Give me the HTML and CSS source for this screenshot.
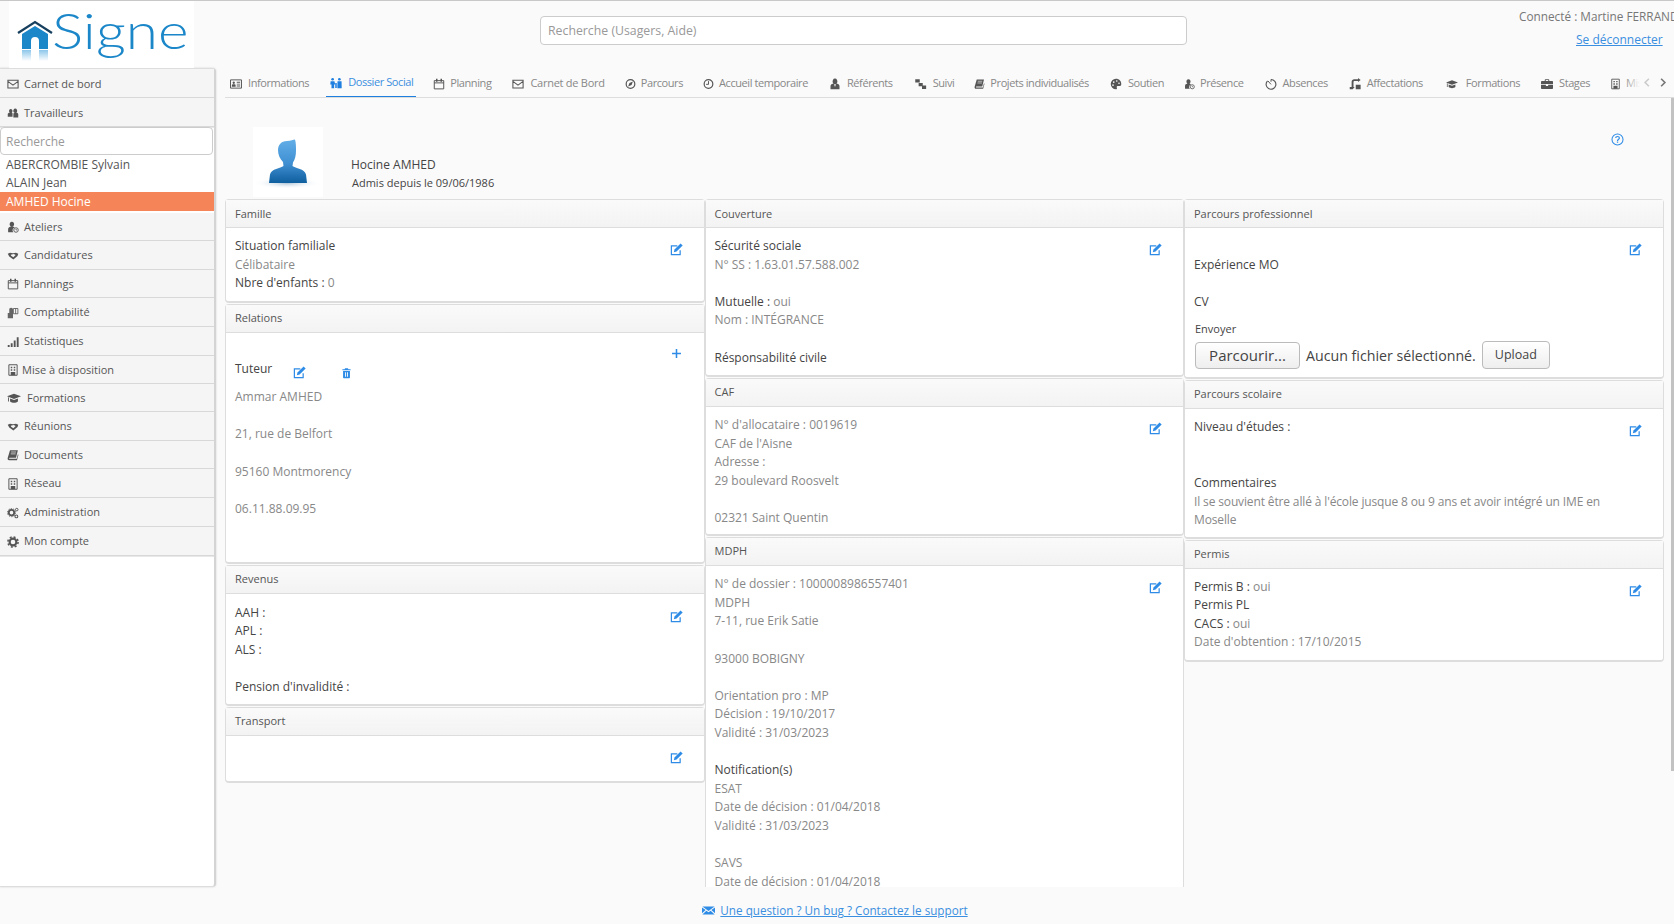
FILE: index.html
```html
<!DOCTYPE html>
<html lang="fr">
<head>
    <meta charset="UTF-8">
    <title>Signe - Dossier Social</title>
    <link rel="stylesheet" href="styles.css">
</head>
<body>
    <!-- icon set -->
    <svg class="defs" width="0" height="0">
        <symbol id="i-mail" viewBox="0 0 16 16"><path d="M1.2 3h13.6v10.4H1.2z M1.2 4.600L8 9.600l6.800-5" fill="none" stroke="currentColor" stroke-width="1.400"/></symbol>
        <symbol id="i-users" viewBox="0 0 16 16"><path d="M5 2.500a2.300 2.800 0 1 1-.01 0zM1 13V9.500c0-1.300 1.200-2 2.400-2h3.200C7.800 7.500 7.400 8.500 7.400 9.500V13z M11 2a2.600 3 0 1 1-.01 0zM8.500 14V9.500C8.500 8 9.500 7.500 10.500 7.500h1.500c1.500 0 3 .6 3 2.200V14z" fill="currentColor"/></symbol>
        <symbol id="i-userclock" viewBox="0 0 16 16"><path d="M6.500 1a3 3.400 0 1 1-.01 0zM1.500 15v-4c0-2 1.500-3.200 3-3.200h4c.8 0 1.400.3 1.900.8A3.800 3.800 0 0 0 8.500 15z" fill="currentColor"/><circle cx="12" cy="12" r="3" fill="none" stroke="currentColor" stroke-width="1.200"/><path d="M12 10.500V12h1.200" fill="none" stroke="currentColor"/></symbol>
        <symbol id="i-shake" viewBox="0 0 16 16"><path d="M1 5l3-1.500 4 .8 4-.8L15 5l-1 3-5.500 4.500L3 8.500z" fill="currentColor"/><path d="M5 6.200l4-.9 2.500 1.500-3 3-3-2.200z" fill="#f5f5f5"/></symbol>
        <symbol id="i-cal" viewBox="0 0 16 16"><path d="M1.700 3.500h12.600v11H1.700z M1.700 6.500h12.600" fill="none" stroke="currentColor" stroke-width="1.300"/><path d="M4 1h2v4H4zM10 1h2v4h-2z" fill="currentColor"/></symbol>
        <symbol id="i-compta" viewBox="0 0 16 16"><path d="M1 8h7v7H1zM3 8V3.500C3 2 4 1 5.500 1S8 2 8 3.500V8" fill="currentColor" fill-opacity=".9"/><path d="M8.500 2h6v7h-6z M11.500 2v7" fill="none" stroke="currentColor" stroke-width="1.100"/></symbol>
        <symbol id="i-signal" viewBox="0 0 16 16"><path d="M1 12h2.500v2.500H1zM5 9.500h2.500v5H5zM9 6h2.500v8.500H9zM13 1.500h2.500v13H13z" fill="currentColor"/></symbol>
        <symbol id="i-bldg" viewBox="0 0 16 16"><path d="M2.500 1h11v14h-11z" fill="none" stroke="currentColor" stroke-width="1.300"/><path d="M5 3.500h2v2H5zM9 3.500h2v2H9zM5 7h2v2H5zM9 7h2v2H9zM5 10.500h6v4.500H5z" fill="currentColor"/></symbol>
        <symbol id="i-cap" viewBox="0 0 16 16"><path d="M0 6l8-3 8 3-8 3zM3.500 8.500L8 10.200l4.500-1.700V12c-1 1-3 1.500-4.500 1.500S4.500 13 3.500 12zM1.200 7v5h1V7.400z" fill="currentColor"/></symbol>
        <symbol id="i-book" viewBox="0 0 16 16"><path d="M4 1.500h10.500l-2.500 10H3.500c-.8 0-.9 1.500 0 1.500h9.500l1.500-6 .8.500-2 7.500H3c-2 0-2.500-2-2-3.500z" fill="currentColor"/><path d="M5.500 4h6.500M5 6.500h6.500" stroke="#f5f5f5" stroke-width=".9"/></symbol>
        <symbol id="i-cogs" viewBox="0 0 16 16"><circle cx="6" cy="7.500" r="3.600" fill="none" stroke="currentColor" stroke-width="2.400"/><circle cx="6" cy="7.500" r="5.400" fill="none" stroke="currentColor" stroke-width="1.200" stroke-dasharray="1.800 1.600"/><circle cx="13" cy="3.500" r="1.700" fill="none" stroke="currentColor" stroke-width="1.300"/><circle cx="12.500" cy="12.500" r="1.900" fill="none" stroke="currentColor" stroke-width="1.400"/></symbol>
        <symbol id="i-cog" viewBox="0 0 16 16"><circle cx="8" cy="8" r="4.500" fill="none" stroke="currentColor" stroke-width="2.800"/><circle cx="8" cy="8" r="6.800" fill="none" stroke="currentColor" stroke-width="2" stroke-dasharray="2.700 2.640"/></symbol>
        <symbol id="i-id" viewBox="0 0 16 16"><path d="M.7 2.500h14.600v11H.7z" fill="none" stroke="currentColor" stroke-width="1.300"/><path d="M5 4.500a1.500 1.700 0 1 1-.01 0zM2.500 11.500V9.500c0-.8.600-1.200 1.200-1.200h2.600c.6 0 1.200.4 1.200 1.200v2zM9 5h4.500v1.300H9zM9 7.500h4.500v1.300H9zM9 10h4.500v1.300H9z" fill="currentColor"/></symbol>
        <symbol id="i-family" viewBox="0 0 16 16"><circle cx="3.500" cy="3" r="1.800" fill="currentColor"/><circle cx="12.500" cy="3" r="1.800" fill="currentColor"/><path d="M.8 5.500h5.200L6.800 10H5.500v5H2v-5H.4zM10 5.500h5.400L15.600 15H9.800z M7 8h2v6.500H7z" fill="currentColor"/></symbol>
        <symbol id="i-compass" viewBox="0 0 16 16"><circle cx="8" cy="8" r="6.300" fill="none" stroke="currentColor" stroke-width="1.700"/><path d="M11.500 4.500L9.500 9.500 4.500 11.500 6.500 6.500z" fill="currentColor"/></symbol>
        <symbol id="i-clock" viewBox="0 0 16 16"><circle cx="8" cy="8" r="6.300" fill="none" stroke="currentColor" stroke-width="1.700"/><path d="M8 3.800V8.500H4.500" fill="none" stroke="currentColor" stroke-width="1.400"/></symbol>
        <symbol id="i-tie" viewBox="0 0 16 16"><path d="M8 .8a3.200 3.800 0 1 1-.01 0zM2 15v-4c0-2 1.400-3.200 3-3.200h1.500L8 12l1.500-4.200H11c1.600 0 3 1.200 3 3.200v4z" fill="currentColor"/></symbol>
        <symbol id="i-steps" viewBox="0 0 16 16"><path d="M1 1.500h6V6H1zM5.500 6.500h5.500V11H5.500zM10 10h5.500v4.500H10z" fill="currentColor"/></symbol>
        <symbol id="i-palette" viewBox="0 0 16 16"><path d="M8 1a7 7 0 0 0 0 14c1.500 0 1.500-1.500 1-2.500-.5-1.200.5-2 1.500-2h2.500C15 10.500 15 8.500 15 7.500 15 4 12 1 8 1z" fill="currentColor"/><circle cx="5" cy="5.500" r="1.100" fill="#fafafa"/><circle cx="9" cy="4" r="1.100" fill="#fafafa"/><circle cx="12" cy="7" r="1.100" fill="#fafafa"/><circle cx="4" cy="9.500" r="1.100" fill="#fafafa"/></symbol>
        <symbol id="i-watch" viewBox="0 0 16 16"><path d="M8 2a6.500 6.500 0 1 1-4.600 1.900" fill="none" stroke="currentColor" stroke-width="1.500"/><path d="M8 2v3M4 4l4 4.500" fill="none" stroke="currentColor" stroke-width="1.300"/></symbol>
        <symbol id="i-affect" viewBox="0 0 16 16"><path d="M5 15H1v-3h2.500V5C3.500 3 5 1.500 7 1.500h5V0l3.500 2.700L12 5.400V4H7.500C6.500 4 6 4.500 6 5.500V12h1.500zM9 9h6.500v6H9z" fill="currentColor"/></symbol>
        <symbol id="i-case" viewBox="0 0 16 16"><path d="M5 4V2.500C5 1.800 5.500 1.500 6 1.500h4c.5 0 1 .3 1 1V4h4c.5 0 1 .5 1 1v3H0V5c0-.5.5-1 1-1zM6.300 4h3.400V2.800H6.300zM0 9h6.500v1.500h3V9H16v4.500c0 .5-.5 1-1 1H1c-.5 0-1-.5-1-1z" fill="currentColor"/></symbol>
        <symbol id="i-edit" viewBox="0 0 16 16"><path d="M12.500 9v5.300H1.700V3.500H9" fill="none" stroke="currentColor" stroke-width="1.500"/><path d="M13 .5l2.600 2.600-7.500 7.500-3.400.8.800-3.400z" fill="currentColor"/></symbol>
        <symbol id="i-trash" viewBox="0 0 16 16"><path d="M6 1h4l.8 1.500H14V4H2V2.500h3.200zM3 5h10v9.500c0 .5-.5 1-1 1H4c-.5 0-1-.5-1-1z" fill="currentColor"/><path d="M6 7h1.300v6.500H6zM8.700 7H10v6.500H8.700z" fill="#fff"/></symbol>
        <symbol id="i-plus" viewBox="0 0 16 16"><path d="M8 2.500v11M2.500 8h11" stroke="currentColor" stroke-width="1.900"/></symbol>
        <symbol id="i-help" viewBox="0 0 16 16"><circle cx="8" cy="8" r="6.800" fill="none" stroke="currentColor" stroke-width="1.300"/><path d="M5.800 6.300C5.800 5 6.800 4.300 8 4.300s2.300.7 2.300 2c0 1.800-2.300 1.800-2.300 3.400" fill="none" stroke="currentColor" stroke-width="1.500"/><path d="M7.200 10.500h1.600V12H7.200z" fill="currentColor"/></symbol>
        <symbol id="i-env" viewBox="0 0 16 16"><path d="M.5 3h15L8 8.500zM0 4.200l4.500 3.300L0 11.500zM16 4.200v7.300l-4.500-4zM5.300 8.200L8 10l2.700-1.800L15.500 13H.5z" fill="currentColor"/></symbol>
        <symbol id="i-prev" viewBox="0 0 16 16"><path d="M11 2L5 8l6 6" fill="none" stroke="currentColor" stroke-width="2.600"/></symbol>
        <symbol id="i-next" viewBox="0 0 16 16"><path d="M5 2l6 6-6 6" fill="none" stroke="currentColor" stroke-width="2.600"/></symbol>
    </svg>

    <header class="top">
        <div class="logo">
            <svg class="logo-house" viewBox="0 0 36 44">
                <defs>
                    <linearGradient id="refl" x1="0" y1="0" x2="0" y2="1">
                        <stop offset="0" stop-color="#8cc6ea"/>
                        <stop offset="1" stop-color="#ffffff"/>
                    </linearGradient>
                </defs>
                <path d="M1 13L18 2l17 11" fill="none" stroke="#17405f" stroke-width="2.200"/>
                <path d="M5 14L18 6l13 8v15H22v-8a4 4 0 0 0-8 0v8H5z" fill="#1b87c9"/>
                <path d="M5 30h9v11H5zM22 30h9v11h-9z" fill="url(#refl)"/>
            </svg>
            <span class="logo-text">Signe</span>
        </div>
        <div class="search-wrap">
            <input class="search" type="text" placeholder="Recherche (Usagers, Aide)">
        </div>
        <div class="user">
            <div class="user-name">Connecté : Martine FERRAND</div>
            <a class="user-out" href="#">Se déconnecter</a>
        </div>
    </header>

    <div class="layout">
        <nav class="side">
            <a class="side-item"><svg class="ico"><use href="#i-mail"/></svg>Carnet de bord</a>
            <a class="side-item"><svg class="ico"><use href="#i-users"/></svg>Travailleurs</a>
            <input class="side-search" type="text" placeholder="Recherche">
            <ul class="people">
                <li>ABERCROMBIE Sylvain</li>
                <li>ALAIN Jean</li>
                <li class="selected">AMHED Hocine</li>
            </ul>
            <a class="side-item short first"><svg class="ico"><use href="#i-userclock"/></svg>Ateliers</a>
            <a class="side-item"><svg class="ico"><use href="#i-shake"/></svg>Candidatures</a>
            <a class="side-item short"><svg class="ico"><use href="#i-cal"/></svg>Plannings</a>
            <a class="side-item"><svg class="ico"><use href="#i-compta"/></svg>Comptabilité</a>
            <a class="side-item"><svg class="ico"><use href="#i-signal"/></svg>Statistiques</a>
            <a class="side-item short"><svg class="ico narrow"><use href="#i-bldg"/></svg>Mise à disposition</a>
            <a class="side-item short"><svg class="ico wide"><use href="#i-cap"/></svg>Formations</a>
            <a class="side-item"><svg class="ico"><use href="#i-shake"/></svg>Réunions</a>
            <a class="side-item short"><svg class="ico"><use href="#i-book"/></svg>Documents</a>
            <a class="side-item"><svg class="ico"><use href="#i-bldg"/></svg>Réseau</a>
            <a class="side-item"><svg class="ico"><use href="#i-cogs"/></svg>Administration</a>
            <a class="side-item"><svg class="ico"><use href="#i-cog"/></svg>Mon compte</a>
        </nav>

        <main class="main">
            <div class="tabs-bar">
                <div class="tabs">
                    <a class="tab"><svg class="ico"><use href="#i-id"/></svg>Informations</a>
                    <a class="tab active"><svg class="ico"><use href="#i-family"/></svg>Dossier Social</a>
                    <a class="tab"><svg class="ico m"><use href="#i-cal"/></svg>Planning</a>
                    <a class="tab loose"><svg class="ico"><use href="#i-mail"/></svg>Carnet de Bord</a>
                    <a class="tab"><svg class="ico s"><use href="#i-compass"/></svg>Parcours</a>
                    <a class="tab"><svg class="ico s"><use href="#i-clock"/></svg>Accueil temporaire</a>
                    <a class="tab"><svg class="ico"><use href="#i-tie"/></svg>Référents</a>
                    <a class="tab"><svg class="ico l"><use href="#i-steps"/></svg>Suivi</a>
                    <a class="tab"><svg class="ico s"><use href="#i-book"/></svg>Projets individualisés</a>
                    <a class="tab"><svg class="ico"><use href="#i-palette"/></svg>Soutien</a>
                    <a class="tab"><svg class="ico s"><use href="#i-userclock"/></svg>Présence</a>
                    <a class="tab"><svg class="ico"><use href="#i-watch"/></svg>Absences</a>
                    <a class="tab"><svg class="ico"><use href="#i-affect"/></svg>Affectations</a>
                    <a class="tab"><svg class="ico xl"><use href="#i-cap"/></svg>Formations</a>
                    <a class="tab"><svg class="ico"><use href="#i-case"/></svg>Stages</a>
                    <a class="tab"><svg class="ico s"><use href="#i-bldg"/></svg>Mise à disposition</a>
                </div>
                <div class="tabs-arrows">
                    <svg class="arrow off"><use href="#i-prev"/></svg>
                    <svg class="arrow"><use href="#i-next"/></svg>
                </div>
            </div>

            <div class="content">
                <div class="person">
                    <div class="avatar">
                        <svg viewBox="0 0 70 70" width="70" height="70">
                            <defs>
                                <linearGradient id="av" x1="0" y1="0" x2="0" y2="1">
                                    <stop offset="0" stop-color="#62aee8"/>
                                    <stop offset=".55" stop-color="#3f8fd2"/>
                                    <stop offset="1" stop-color="#0f5f9f"/>
                                </linearGradient>
                                <radialGradient id="avs">
                                    <stop offset="0" stop-color="#6a93b5" stop-opacity=".55"/>
                                    <stop offset="1" stop-color="#ffffff" stop-opacity="0"/>
                                </radialGradient>
                            </defs>
                            <ellipse cx="34" cy="56" rx="34" ry="6" fill="url(#avs)"/>
                            <path d="M25 23c0-5 3-9 9-9 4 0 6-1.500 8-1.500 1 3 1 8 1 11 0 5-1 9-3 12l-.5 3.500c3 2.500 12 2.500 13.500 8.500l1 8.500H16l1-8.500c1.500-6 10.500-6 13.500-8.500L30 35c-3-3-5-7-5-12z" fill="url(#av)"/>
                        </svg>
                    </div>
                    <div class="person-info">
                        <div class="person-name">Hocine AMHED</div>
                        <div class="person-since">Admis depuis le 09/06/1986</div>
                    </div>
                    <svg class="help"><use href="#i-help"/></svg>
                </div>

                <div class="columns">
                    <div class="col">
                        <section class="panel">
                            <h3>Famille</h3>
                            <div class="panel-body">
                                <svg class="edit"><use href="#i-edit"/></svg>
                                <p>Situation familiale</p>
                                <p class="val">Célibataire</p>
                                <p>Nbre d'enfants : <span class="val">0</span></p>
                            </div>
                        </section>
                        <section class="panel">
                            <h3>Relations</h3>
                            <div class="panel-body rel-body">
                                <svg class="edit add"><use href="#i-plus"/></svg>
                                <div class="rel-head">
                                    <p>Tuteur</p>
                                    <svg class="edit-inline"><use href="#i-edit"/></svg>
                                    <svg class="trash"><use href="#i-trash"/></svg>
                                </div>
                                <p class="val rel-line">Ammar AMHED</p>
                                <p class="val rel-line">21, rue de Belfort</p>
                                <p class="val rel-line">95160 Montmorency</p>
                                <p class="val rel-line">06.11.88.09.95</p>
                            </div>
                        </section>
                        <section class="panel">
                            <h3>Revenus</h3>
                            <div class="panel-body low">
                                <svg class="edit"><use href="#i-edit"/></svg>
                                <p>AAH :</p>
                                <p>APL :</p>
                                <p>ALS :</p>
                                <p class="gap">&nbsp;</p>
                                <p>Pension d'invalidité :</p>
                            </div>
                        </section>
                        <section class="panel">
                            <h3>Transport</h3>
                            <div class="panel-body transport">
                                <svg class="edit"><use href="#i-edit"/></svg>
                            </div>
                        </section>
                    </div>

                    <div class="col">
                        <section class="panel">
                            <h3>Couverture</h3>
                            <div class="panel-body">
                                <svg class="edit"><use href="#i-edit"/></svg>
                                <p>Sécurité sociale</p>
                                <p class="val">N° SS : 1.63.01.57.588.002</p>
                                <p class="gap">&nbsp;</p>
                                <p>Mutuelle : <span class="val">oui</span></p>
                                <p class="val">Nom : INTÉGRANCE</p>
                                <p class="gap">&nbsp;</p>
                                <p>Résponsabilité civile</p>
                            </div>
                        </section>
                        <section class="panel">
                            <h3>CAF</h3>
                            <div class="panel-body tight">
                                <svg class="edit"><use href="#i-edit"/></svg>
                                <p class="val">N° d'allocataire : 0019619</p>
                                <p class="val">CAF de l'Aisne</p>
                                <p class="val">Adresse :</p>
                                <p class="val">29 boulevard Roosvelt</p>
                                <p class="gap">&nbsp;</p>
                                <p class="val">02321 Saint Quentin</p>
                            </div>
                        </section>
                        <section class="panel">
                            <h3>MDPH</h3>
                            <div class="panel-body">
                                <svg class="edit"><use href="#i-edit"/></svg>
                                <p class="val">N° de dossier : 1000008986557401</p>
                                <p class="val">MDPH</p>
                                <p class="val">7-11, rue Erik Satie</p>
                                <p class="gap">&nbsp;</p>
                                <p class="val">93000 BOBIGNY</p>
                                <p class="gap">&nbsp;</p>
                                <p class="val">Orientation pro : MP</p>
                                <p class="val">Décision : 19/10/2017</p>
                                <p class="val">Validité : 31/03/2023</p>
                                <p class="gap">&nbsp;</p>
                                <p>Notification(s)</p>
                                <p class="val">ESAT</p>
                                <p class="val">Date de décision : 01/04/2018</p>
                                <p class="val">Validité : 31/03/2023</p>
                                <p class="gap">&nbsp;</p>
                                <p class="val">SAVS</p>
                                <p class="val">Date de décision : 01/04/2018</p>
                            </div>
                        </section>
                    </div>

                    <div class="col">
                        <section class="panel">
                            <h3>Parcours professionnel</h3>
                            <div class="panel-body">
                                <svg class="edit"><use href="#i-edit"/></svg>
                                <p class="gap">&nbsp;</p>
                                <p>Expérience MO</p>
                                <p class="gap">&nbsp;</p>
                                <p>CV</p>
                                <div class="upload-label">Envoyer</div>
                                <div class="upload">
                                    <button class="btn-file" type="button">Parcourir...</button>
                                    <span class="no-file">Aucun fichier sélectionné.</span>
                                    <button class="btn-upload" type="button">Upload</button>
                                </div>
                            </div>
                        </section>
                        <section class="panel">
                            <h3>Parcours scolaire</h3>
                            <div class="panel-body school">
                                <svg class="edit"><use href="#i-edit"/></svg>
                                <p>Niveau d'études :</p>
                                <p class="gap">&nbsp;</p>
                                <p class="gap">&nbsp;</p>
                                <p>Commentaires</p>
                                <p class="val comment">Il se souvient être allé à l'école jusque 8 ou 9 ans et avoir intégré un IME en Moselle</p>
                            </div>
                        </section>
                        <section class="panel">
                            <h3>Permis</h3>
                            <div class="panel-body">
                                <svg class="edit"><use href="#i-edit"/></svg>
                                <p>Permis B : <span class="val">oui</span></p>
                                <p>Permis PL</p>
                                <p>CACS : <span class="val">oui</span></p>
                                <p class="val">Date d'obtention : 17/10/2015</p>
                            </div>
                        </section>
                    </div>
                </div>
            </div>
            <div class="scroll-thumb"></div>
        </main>
    </div>

    <footer class="foot">
        <svg class="foot-ico"><use href="#i-env"/></svg>
        <a href="#">Une question ? Un bug ? Contactez le support</a>
    </footer>
</body>
</html>
```

FILE: styles.css
```css
* {
    box-sizing: border-box;
}
html, body {
    height: 100%;
}
body {
    margin: 0;
    height: 924px;
    overflow: hidden;
    background-color: #fafafa;
    color: #444;
    font-family: "Open Sans", sans-serif;
    font-size: 12px;
    line-height: 18.6px;
    border-top: 1px solid #c8c8c8;
}
.defs {
    position: absolute;
}
p {
    margin: 0;
}

/* header */
.top {
    height: 67px;
    display: flex;
    position: relative;
}
.logo {
    width: 185px;
    height: 67px;
    margin-left: 9px;
    background-color: #fff;
    display: flex;
    overflow: hidden;
    padding: 0 0 0 8px;
}
.logo-house {
    width: 36px;
    height: 44px;
    margin-top: 19px;
    flex: none;
}
.logo-text {
    font-family: Lato, sans-serif;
    font-weight: 300;
    font-size: 50px;
    line-height: 58px;
    color: #1b87c9;
    margin-left: -1px;
    transform: scaleX(1.17);
    transform-origin: left top;
}
.search-wrap {
    margin-left: 346px;
    padding-top: 15px;
}
.search {
    width: 647px;
    height: 29px;
    border: 1px solid #ccc;
    border-radius: 4px;
    background-color: #fff;
    padding: 0 7px 1px;
    font-family: inherit;
    font-size: 12.300px;
    color: #555;
}
.search::placeholder, .side-search::placeholder {
    color: #999;
}
.user {
    position: absolute;
    left: 1519px;
    top: 6px;
    width: 155px;
    overflow: hidden;
    white-space: nowrap;
    color: #777;
    font-size: 12px;
}
.user-name {
    font-size: 11.800px;
}
.user-out {
    display: block;
    margin: 5px 0 0 57px;
    color: #3b8fe0;
    text-decoration: underline;
}

/* sidebar */
.layout {
    display: flex;
    height: 819px;
}
.side {
    width: 216px;
    flex: none;
    background-color: #fff;
    border: 1px solid #ddd;
    border-left: 0;
    border-right: 2px solid #d4d4d4;
    border-radius: 0 4px 4px 0;
    box-shadow: 0 0 2px #ccc;
}
.side-item {
    display: flex;
    align-items: center;
    height: 29px;
    padding: 2px 0 0 7px;
    background-color: #f5f5f5;
    border-bottom: 1px solid #d8d8d8;
    box-shadow: 0 1px 0 #e8e8e8;
    color: #555;
    font-size: 11px;
}
.side-item.short {
    height: 28px;
}
.side-item.first {
    margin-top: 1.500px;
}
.side-item .ico {
    margin-right: 5px;
}
.side-item .ico.narrow {
    margin-right: 3px;
}
.side-item .ico.wide {
    width: 14px;
    height: 14px;
    margin-right: 6px;
}
.ico {
    width: 12px;
    height: 12px;
    flex: none;
    color: #555;
}
.side-search {
    display: block;
    width: 213px;
    height: 28px;
    border: 1px solid #ccc;
    border-radius: 4px;
    background-color: #fff;
    padding: 0 5px;
    font-family: inherit;
    font-size: 12px;
}
.people {
    list-style: none;
    margin: 0;
    padding: .5px 0 0;
    color: #555;
}
.people li {
    height: 18.400px;
    padding-left: 6px;
    line-height: 18.400px;
}
.people .selected {
    height: 19px;
    line-height: 19px;
    background-color: #f58558;
    color: #fff;
}

/* tabs */
.main {
    flex: 1;
    min-width: 0;
    height: 819px;
    padding-left: 9px;
    display: flex;
    flex-direction: column;
    position: relative;
}
.tabs-bar {
    height: 30px;
    flex: none;
    border-bottom: 1px solid #ddd;
    position: relative;
    overflow: hidden;
}
.tabs {
    display: flex;
    gap: 14px;
    padding-left: 1px;
    height: 30px;
    white-space: nowrap;
}
.tab {
    display: flex;
    align-items: center;
    height: 30px;
    padding: 1px 3px 0;
    color: #888;
    font-size: 11px;
    letter-spacing: -.42px;
    flex: none;
}
.tab.loose {
    letter-spacing: -.26px;
}
.tab .ico {
    width: 14px;
    margin-right: 5px;
}
.tab .ico.s {
    width: 11px;
}
.tab .ico.m {
    width: 12px;
}
.tab .ico.l {
    width: 15px;
}
.tab .ico.xl {
    width: 18px;
}
.tab.active {
    color: #3b8fe0;
    border-bottom: 2px solid #1e7fe0;
}
.tab.active .ico {
    color: #1e7fe0;
}
.tabs-arrows {
    position: absolute;
    right: 0;
    top: 0;
    width: 50px;
    height: 29px;
    padding-right: 6px;
    display: flex;
    align-items: center;
    justify-content: flex-end;
    gap: 6px;
    background-image: linear-gradient(to right, rgba(250,250,250,0), #fafafa 32%);
}
.arrow {
    width: 10px;
    height: 11px;
    color: #777;
}
.arrow.off {
    color: #ccc;
}
.scroll-thumb {
    position: absolute;
    right: 0;
    top: 30px;
    width: 3px;
    height: 673px;
    background-color: #c2c2c2;
}

/* person header */
.content {
    flex: 1;
    min-height: 0;
    overflow: hidden;
    margin-right: 10px;
}
.person {
    height: 101px;
    position: relative;
    display: flex;
}
.avatar {
    margin: 29px 0 0 28px;
    width: 70px;
    height: 70px;
    background-color: #fff;
}
.person-info {
    margin: 58px 0 0 28px;
}
.person-name {
    font-size: 12px;
    line-height: 17.600px;
}
.person-since {
    font-size: 11px;
    margin-left: 1px;
}
.help {
    position: absolute;
    left: 1386px;
    top: 35px;
    width: 13px;
    height: 13px;
    color: #2f8ce6;
}

/* panels */
.columns {
    display: flex;
}
.col {
    width: 479.500px;
    flex: none;
}
.panel {
    background-color: #fff;
    border: 1px solid #ddd;
    border-bottom: 2px solid #ddd;
    border-radius: 4px;
    margin-bottom: 1px;
}
.panel h3 {
    margin: 0;
    height: 28px;
    padding-left: 9px;
    background-image: linear-gradient(#fafafa, #f3f3f3);
    border-bottom: 1px solid #ddd;
    color: #555;
    font-size: 11px;
    font-weight: 400;
    line-height: 27px;
}
.panel + .panel h3 {
    line-height: 25px;
}
.panel-body {
    padding: 9px 9px 8px 9px;
    color: #444;
    position: relative;
}
.panel-body.tight {
    padding: 9px 9px 6.500px 9px;
}
.panel-body.school {
    padding: 9.500px 9px 6.500px 9px;
}
.panel-body.low {
    padding: 10px 9px 7px 9px;
}
.val {
    color: #888;
}
.edit {
    float: right;
    width: 13px;
    height: 13px;
    margin: 6px 12px 0 0;
    color: #2f8ce6;
}
.edit.add {
    margin-top: 0;
}
.transport {
    height: 45px;
}
.rel-body {
    padding-top: 14px;
    height: 229px;
}
.rel-head {
    display: flex;
    padding-top: 13px;
    height: 41px;
}
.edit-inline {
    width: 13px;
    height: 13px;
    margin: 6px 0 0 20.500px;
    color: #2f8ce6;
}
.trash {
    width: 11px;
    height: 12px;
    margin: 7px 0 0 35px;
    color: #2f8ce6;
}
.rel-line {
    margin-bottom: 18.900px;
}
.upload-label {
    font-size: 11px;
    margin-top: 9px;
    margin-left: 1px;
}
.upload {
    display: flex;
    align-items: flex-end;
    margin: 2px 0 0 1px;
}
.btn-file, .btn-upload {
    border: 1px solid #bbb;
    border-radius: 4px;
    background-image: linear-gradient(#fff, #eee);
    color: #444;
    font-family: inherit;
    padding: 0;
}
.btn-file {
    width: 105px;
    height: 27px;
    font-size: 15px;
}
.no-file {
    margin-left: 6px;
    line-height: 27px;
    font-size: 14.200px;
    color: #444;
}
.btn-upload {
    width: 68px;
    height: 28px;
    margin-left: 6px;
    font-size: 12.500px;
}
.comment {
    padding-right: 40px;
    letter-spacing: -.14px;
}

/* footer */
.foot {
    height: 37px;
    display: flex;
    align-items: center;
    justify-content: center;
    padding: 10px 4px 0 0;
}
.foot a {
    color: #3b8fe0;
    text-decoration: underline;
    font-size: 11.700px;
}
.foot-ico {
    width: 13px;
    height: 13px;
    margin-right: 5px;
    color: #2f8ce6;
}
```
